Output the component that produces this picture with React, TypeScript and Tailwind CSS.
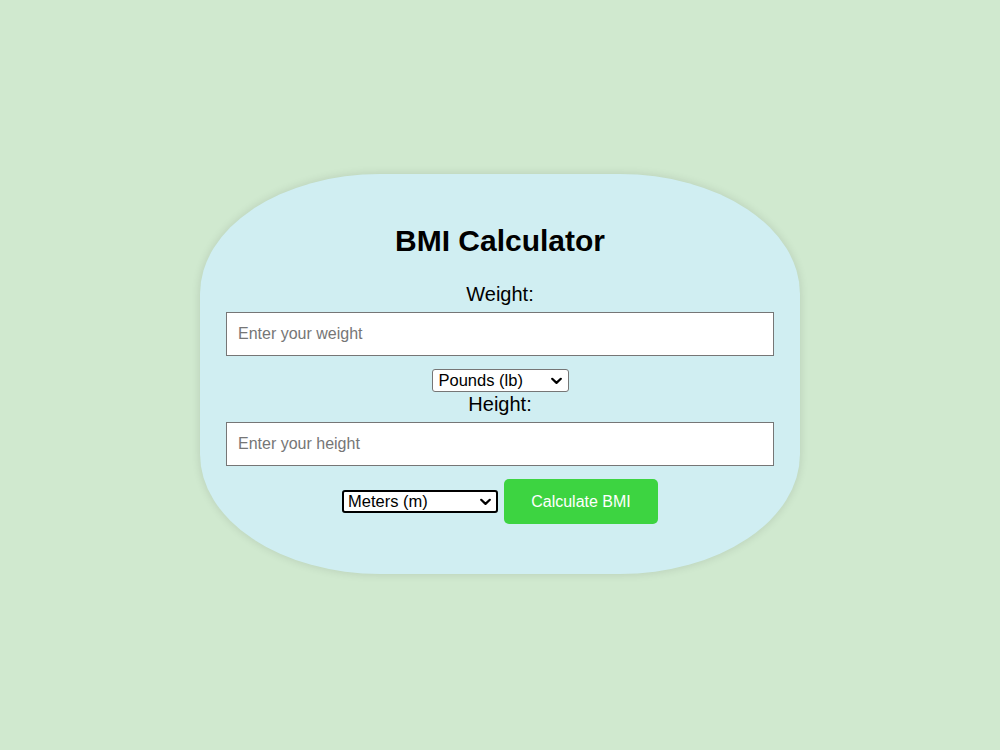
import React, { useState } from 'react';

function Chevron() {
  return (
    <svg
      className="pointer-events-none absolute right-[7px] top-1/2 -translate-y-1/2"
      width="11"
      height="7"
      viewBox="0 0 11 7"
      fill="none"
    >
      <path d="M1.2 1.2 L5.5 5.4 L9.8 1.2" stroke="#000" strokeWidth="2.2" strokeLinecap="round" strokeLinejoin="round" />
    </svg>
  );
}

export default function App() {
  const [weight, setWeight] = useState('');
  const [height, setHeight] = useState('');
  const [weightUnit, setWeightUnit] = useState('lb');
  const [heightUnit, setHeightUnit] = useState('m');

  return (
    <div
      className="w-full h-screen bg-[#d0e9cf] flex items-center justify-center"
      style={{ fontFamily: '"Liberation Sans", Arial, sans-serif' }}
    >
      {/* Card */}
      <div className="mb-[2px] w-[600px] h-[400px] bg-[#d0eef2] rounded-[30%] shadow-[0_0_10px_rgba(0,0,0,0.12)] px-[26px] pt-[50px] flex flex-col items-center text-black">
        <h1 className="text-[30px] leading-[34px] font-bold">BMI Calculator</h1>

        <label className="mt-[24px] text-[20px] leading-[24px]">Weight:</label>
        <input
          type="text"
          value={weight}
          onChange={(e) => setWeight(e.target.value)}
          placeholder="Enter your weight"
          className="mt-[6px] w-full h-[44px] bg-white border border-[#767676] px-[11px] text-[16px] placeholder:text-[#767676] outline-none"
        />

        <div className="relative mt-[13px]">
          <select
            value={weightUnit}
            onChange={(e) => setWeightUnit(e.target.value)}
            className="appearance-none block w-[137px] h-[23px] bg-white border border-[#767676] rounded-[3px] pl-[6px] text-[16.5px] leading-[19px] outline-none"
          >
            <option value="lb">Pounds (lb)</option>
            <option value="kg">Kilograms (kg)</option>
          </select>
          <Chevron />
        </div>

        <label className="text-[20px] leading-[24px]">Height:</label>
        <input
          type="text"
          value={height}
          onChange={(e) => setHeight(e.target.value)}
          placeholder="Enter your height"
          className="mt-[6px] w-full h-[44px] bg-white border border-[#767676] px-[11px] text-[16px] placeholder:text-[#767676] outline-none"
        />

        <div className="mt-[13px] flex items-center gap-[6px]">
          <div className="relative">
            <select
              value={heightUnit}
              onChange={(e) => setHeightUnit(e.target.value)}
              className="appearance-none block w-[156px] h-[23px] bg-white border-2 border-black rounded-[3px] pl-[4px] text-[16.5px] leading-[19px] outline-none"
            >
              <option value="m">Meters (m)</option>
              <option value="ft">Feet (ft)</option>
            </select>
            <Chevron />
          </div>
          <button className="w-[154px] h-[45px] bg-[#3dd441] text-white text-[16px] rounded-[5px]">
            Calculate BMI
          </button>
        </div>
      </div>
    </div>
  );
}
